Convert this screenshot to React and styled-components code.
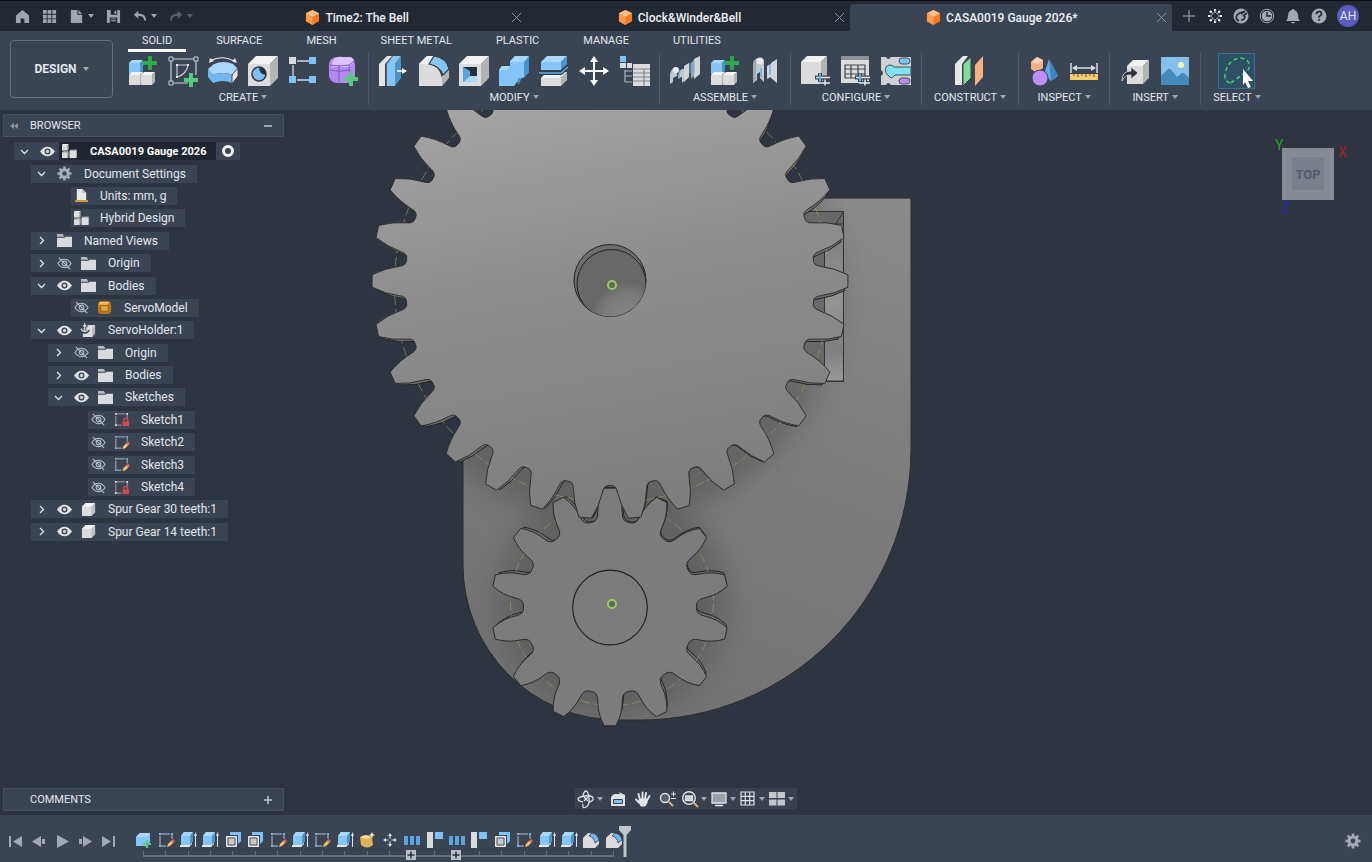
import React, { useState } from 'react';
import styled, { createGlobalStyle, css } from 'styled-components';

const GlobalStyle = createGlobalStyle`
  * {
    box-sizing: border-box;
  }

  body {
    margin: 0;
    background-color: #2e3440;
    color: #e4e7ec;
    font-family: Roboto, "Noto Sans", sans-serif;
    font-size: 12px;
  }

  button {
    margin: 0;
    padding: 0;
    border: none;
    background: none;
    color: inherit;
    font: inherit;
    cursor: pointer;
  }

  ul, ol {
    margin: 0;
    padding: 0;
    list-style: none;
  }

  svg {
    display: block;
    flex: none;
  }
`;

/* ---------- colours shared by the icons ---------- */

const tones = {
  white: { front: '#dcdcdc', top: '#f3f3f3', side: '#b4b4b4' },
  blue: { front: '#85c5f8', top: '#a8d8fd', side: '#4b93cb' },
};

const Cube = ({ x, y, w, h, d, tone = 'white' }) => {
  const t = tones[tone];
  return (
    <g>
      <path d={`M${x} ${y + d}l${d} ${-d}h${w}l${-d} ${d}z`} fill={t.top} />
      <path d={`M${x + w} ${y + d}l${d} ${-d}v${h}l${-d} ${d}z`} fill={t.side} />
      <rect x={x} y={y + d} width={w} height={h} fill={t.front} />
    </g>
  );
};

const Plus = ({ x, y, s = 7, color = '#2fa84f' }) => (
  <path d={`M${x - s} ${y}h${2 * s}M${x} ${y - s}v${2 * s}`} stroke={color} strokeWidth={s * 0.56} />
);

const Sliders = () => (
  <g>
    <path d="M14 21.500h15M18 27h11M19 17v9M24 23v7" stroke="#3b4453" strokeWidth="4" />
    <path d="M15 21.500h14M18 27h11M24 23.500v6" stroke="#e8e8e8" strokeWidth="1.500" />
    <path d="M19 17.500v8" stroke="#5cb3ee" strokeWidth="2" />
  </g>
);

const Component = () => (
  <g>
    <Cube x={1} y={4} w={11} h={11} d={3} tone="blue" />
    <Cube x={1} y={16} w={11} h={10} d={3} />
    <Cube x={13} y={16} w={11} h={10} d={3} />
    <Plus x={22} y={7} />
  </g>
);

const ribbonIcons = {
  component: <Component />,
  sketch: (
    <g fill="none" stroke="#c9ced6">
      <path d="M5 3h21M3 5v20M28 5v14M5 27h15" strokeWidth="1.2" />
      <path d="M9 9h11a14 14 0 0 1-11 12z" strokeWidth="1.2" />
      <path d="M1 1h4v4h-4zM26 1h4v4h-4zM1 25h4v4h-4z" fill="#3b4453" strokeWidth="1" />
      <path d="M8 8h2v2h-2zM19 8h2v2h-2zM8 20h2v2h-2z" fill="#e8e8e8" stroke="none" />
      <Plus x={23} y={24} s={7} color="#57cb7c" />
    </g>
  ),
  revolve: (
    <g>
      <path d="M2 5Q15-2 27 6" fill="none" stroke="#eee" strokeWidth="1.200" />
      <path d="M1 7l1-5 4 3zM29 7l-5-2 3-3z" fill="#eee" />
      <path d="M0 13l6-5q10-4 19 0l5 5-5 6q-10-4-20 0z" fill="#a8d8fd" />
      <path d="M0 13q2 2 5 6v8l-5-6zM5 19q10-4 19 0v8q-9-4-19 0z" fill="#70b8f0" />
      <path d="M24 19l6-7v8l-6 8z" fill="#e8e8e8" stroke="#444" strokeWidth="1" />
    </g>
  ),
  hole: (
    <g>
      <Cube x={0} y={0} w={22} h={22} d={8} />
      <circle cx="11" cy="18" r="7" fill="#7cc0f7" stroke="#333b46" strokeWidth="1.5" />
      <path d="M11 11a7 7 0 0 1 7 8q-7-1-7-8" fill="#27303a" />
    </g>
  ),
  pattern: (
    <g>
      <path d="M9 5h12M5 9v12M9 24h12" stroke="#d4d8de" strokeWidth="1.300" />
      <path d="M1 1h7v7h-7z" fill="#dcdcdc" />
      <path d="M21 1h7v7h-7zM1 20h7v7h-7zM21 20h7v7h-7z" fill="#7cc3fa" />
    </g>
  ),
  form: (
    <g>
      <rect x="1" y="1" width="26" height="26" rx="8" fill="#b48af0" />
      <path d="M5 5q3-5 9-4h7q5 0 5 5l-5 5h-16q-3-2 0-6z" fill="#dcc2ff" />
      <path d="M2 14q9 3 19 0M11 9v17M21 9q1 9 0 14M2 9q9 2 19 0l6-5" fill="none" stroke="#8058c8" strokeWidth="1" />
      <Plus x={23} y={23} color="#57cb7c" />
    </g>
  ),
  pressPull: (
    <g>
      <path d="M0 8l8-8h5l-7 8v22h-6z" fill="#e4e4e4" />
      <path d="M7 8l7-8v22l-7 8z" fill="#5d636c" />
      <path d="M8 8l6-8h8l-6 8v22h-8z" fill="#85c5f8" />
      <path d="M16 8l6-8v22l-6 8z" fill="#4b93cb" />
      <path d="M18 15h7" stroke="#fff" strokeWidth="1.500" />
      <path d="M23 12l5 3-5 3z" fill="#fff" />
    </g>
  ),
  fillet: (
    <g>
      <path d="M0 8l8-8h7l-5 8q10 1 13 14v8h-23z" fill="#dcdcdc" />
      <path d="M0 8l8-8h7l-5 8z" fill="#f3f3f3" />
      <path d="M23 20l7-7v9l-7 8z" fill="#b4b4b4" />
      <path d="M10 8l5-8q13 2 15 13l-6 6q-3-9-14-11z" fill="#85c5f8" stroke="#333b46" strokeWidth="1.200" />
    </g>
  ),
  shell: (
    <g>
      <Cube x={0} y={0} w={22} h={22} d={8} />
      <path d="M4 11h14v15h-14z" fill="#27303a" />
      <path d="M4 11l7 4v5l-7 6z" fill="#5aa5dd" />
      <path d="M4 26l7-6h7v6z" fill="#a8d8fd" />
    </g>
  ),
  combine: (
    <g>
      <path d="M0 14l3-4h8v-5l5-5h14v16l-6 6h-5v3l-4 5h-15z" fill="#85c5f8" />
      <path d="M11 6l5-6h14l-5 6zM0 14l3-4h8l-3 4z" fill="#a8d8fd" />
      <path d="M25 6l5-6v16l-5 6zM19 22h4l-4 7z" fill="#4b93cb" />
    </g>
  ),
  split: (
    <g>
      <Cube x={2} y={0} w={20} h={8} d={6} tone="blue" />
      <Cube x={2} y={16} w={20} h={8} d={6} />
      <path d="M0 17h22l7-6" fill="none" stroke="#333b46" strokeWidth="4" />
      <path d="M0 17h22l7-6" fill="none" stroke="#5cb3ee" strokeWidth="1.500" />
    </g>
  ),
  move: (
    <g fill="#fff">
      <path d="M15 5v20M5 15h20" stroke="#fff" strokeWidth="2" />
      <path d="M15 0l4 6h-8zM15 30l4-6h-8zM0 15l6-4v8zM30 15l-6-4v8z" />
    </g>
  ),
  parameters: (
    <g>
      <path d="M1 0h6v6h-6z" fill="#7cc3fa" />
      <path d="M1 7h6v5h-6zM8 7h5v5h-5z" fill="#dcdcdc" />
      <path d="M6 14v12M6 15h7M6 20h7M6 26h7" fill="none" stroke="#aeb4bd" strokeWidth="1.200" />
      <path d="M14 8h17v22h-17z" fill="#dcdcdc" />
      <path d="M14 13h17M14 17h17M14 21h17M14 25h17M25 13v17" stroke="#808790" strokeWidth="1.200" />
    </g>
  ),
  joint: (
    <g>
      <path d="M0 28v-10q2-7 6-7l1 1v8l-4 2v4zM8 22q1-10 6-9v12l-2 2v-6z" fill="#c4c7cc" />
      <path d="M14 10l5-3v14l-5 5zM24 3l6-3v18l-6 5z" fill="#d3d5d9" />
      <path d="M21 7l3-3v16l-3 3z" fill="#9ca1a9" />
      <path d="M9 14v9M20 7v10M24 5v12" stroke="#59b1ef" strokeWidth="1" />
      <circle cx="6" cy="14" r="3" fill="#eaeaea" />
    </g>
  ),
  asBuilt: (
    <g>
      <path d="M3 27v-18q0-6 6-7l5 2v22l-4-4v-6l-3 2v6z" fill="#c4c7cc" />
      <path d="M3 27v-18q0-4 3-6v20z" fill="#a5a9b0" />
      <circle cx="10" cy="5" r="3.500" fill="#eaeaea" />
      <path d="M17 10l4-2v13l-4 2zM21 7l6-4v24l-6-5z" fill="#d3d5d9" />
      <path d="M11 12v9M20 8v11" stroke="#59b1ef" strokeWidth="1.300" />
    </g>
  ),
  configure: (
    <g>
      <Cube x={0} y={0} w={20} h={22} d={6} />
      <Sliders />
    </g>
  ),
  configTable: (
    <g>
      <path d="M0 0h28v27h-28z" fill="#dcdcdc" />
      <path d="M0 0h28v4h-28z" fill="#8b9099" />
      <path d="M4 9h20v13h-20zM4 13h20M4 18h20M10 9v13M17 9v13" fill="none" stroke="#3f4650" strokeWidth="1.200" />
      <Sliders />
    </g>
  ),
  configPuzzle: (
    <g stroke="#4a525e" strokeWidth="1">
      <path d="M0 1h5q2 4 5 0h20v28h-20q-3-4-5 0h-5v-9q4-3 0-6z" fill="#cfd1d5" stroke="none" />
      <rect x="18" y="2" width="11" height="6" rx="3" fill="#7cc3fa" />
      <path d="M5 11q4-4 8 0h17v8h-16q-4 5-6 1-5-3-3-9z" fill="#7fe3f2" />
      <rect x="18" y="22" width="11" height="6" rx="3" fill="#b98cf4" />
    </g>
  ),
  plane: (
    <g>
      <path d="M0 8l8-8h5l-6 8v21h-7z" fill="#e8e8e8" />
      <path d="M8 8l8-7v21l-8 8z" fill="#7fdc9c" stroke="#3a424d" strokeWidth="1" />
      <path d="M20 9l8-9v21l-8 9z" fill="#f4b183" />
    </g>
  ),
  analysis: (
    <g>
      <path d="M2 6l6-5 6 3v8l-6 5-6-4z" fill="#f4b183" />
      <path d="M2 6l6-5 6 3-5 4z" fill="#fbd0b0" />
      <path d="M20 3l9 17-7 5-7-7z" fill="#5cade9" />
      <path d="M20 3l9 17-7 5z" fill="#3f86bf" />
      <circle cx="11" cy="22" r="8" fill="#bd8ff7" stroke="#3b4453" strokeWidth="1" />
    </g>
  ),
  measure: (
    <g>
      <path d="M2 7v10M28 7v10M4 12h22" stroke="#d9dce1" strokeWidth="1.500" />
      <path d="M3 12l5-3v6zM27 12l-5-3v6z" fill="#d9dce1" />
      <path d="M1 18h28v6h-28z" fill="#f5cb70" />
      <path d="M5 18v2M9 18v3M13 18v2M17 18v3M21 18v2M25 18v3" stroke="#6d5a2c" strokeWidth="1" />
    </g>
  ),
  insert: (
    <g>
      <Cube x={7} y={4} w={16} h={18} d={6} />
      <path d="M2 25q0-10 9-10v-4l7 6-7 6v-4q-6-1-9 6z" fill="#2a313b" stroke="#dcdcdc" strokeWidth=".8" />
    </g>
  ),
  canvas: (
    <g>
      <path d="M1 1h28v28h-28z" fill="#86bfea" />
      <path d="M1 20l7-7q2-1 4 2l5 6 5-4q3 0 7 5v7h-28z" fill="#4389bb" />
      <circle cx="21" cy="9" r="3" fill="#fbf1ae" />
    </g>
  ),
  select: (
    <g>
      <path
        d="M8 27q-6-2-5-9 3-15 16-16 10 2 8 10-2 5-8 7-6 6-11 8z"
        fill="none"
        stroke="#4fc47b"
        strokeWidth="1.600"
        strokeDasharray="4 3"
      />
      <path d="M21 13l10 12h-5l3 6-3 1-3-6-2 3z" fill="#fff" />
    </g>
  ),
};

const RibbonIcon = ({ name }) => (
  <svg width="30" height="30" viewBox="0 0 30 30" overflow="visible">
    {ribbonIcons[name]}
  </svg>
);

const smallIcons = {
  home: <path d="M8 1l7 6v8h-5v-5h-4v5h-5v-8z" />,
  grid: <path d="M1 1h4v4h-4zM6 1h4v4h-4zM11 1h4v4h-4zM1 6h4v4h-4zM6 6h4v4h-4zM11 6h4v4h-4zM1 11h4v4h-4zM6 11h4v4h-4zM11 11h4v4h-4z" />,
  file: <path d="M2 1h7v5h5v9h-12zM10 1l4 4h-4z" />,
  save: (
    <g>
      <path d="M1 1h13l1 1v13h-14z" />
      <path d="M5 1h7v5h-7zM4 9h8v6h-8z" fill="#222933" />
      <path d="M9 2h2v3h-2zM5 10h6v1h-6zM5 12h6v1h-6z" />
    </g>
  ),
  undo: <path d="M6 2L1 6.500 6 11v-3q6-1 7 5h2q0-8-9-8z" />,
  redo: <path d="M10 2l5 4.500L10 11v-3q-6-1-7 5h-2q0-8 9-8z" />,
  extensions: (
    <g stroke="#eceef1" strokeWidth="2.200">
      <path d="M8 1v4M13 3l-3 3M15 8h-4M13 13l-3-3M8 15v-4M3 13l3-3M1 8h4M3 3l3 3" strokeDasharray="2.500 1" />
    </g>
  ),
  plug: (
    <g>
      <circle cx="8" cy="8" r="7.500" />
      <path d="M6 13q-4-2-2-6 3-3 6-3M8 6l4-3M10 8l4-3M8 12q4 0 4-4" fill="none" stroke="#222933" strokeWidth="1.600" />
    </g>
  ),
  clock: (
    <g>
      <circle cx="8" cy="8" r="6.800" fill="none" stroke="currentColor" strokeWidth="1" />
      <circle cx="8" cy="8" r="5.300" />
      <path d="M8 4v4h4" fill="none" stroke="#222933" strokeWidth="1.500" />
    </g>
  ),
  bell: <path d="M7 1h2v1q4 1 4 6 0 3 2 5h-14q2-2 2-5 0-5 4-6zM6 14h4q-2 3-4 0z" />,
  help: (
    <g>
      <circle cx="8" cy="8" r="7.500" />
      <path d="M5.500 6q0-2.500 2.500-2.500t2.500 2.500q0 1.500-2.500 2.500v1.200M8 11v1.800" fill="none" stroke="#222933" strokeWidth="1.700" />
    </g>
  ),
  model: (
    <g>
      <path d="M8 0l7 3.500v8.500l-7 4-7-4v-8.500z" fill="#f57a1f" />
      <path d="M8 0l7 3.500-7 4-7-4z" fill="#ffc08d" />
      <path d="M1 3.500l7 4v8.500l-7-4z" fill="#ff9a4d" />
    </g>
  ),
  eye: (
    <g>
      <path d="M0 8q3.500-5 8-5t8 5q-3.500 5-8 5t-8-5z" fill="#e4e4e4" />
      <circle cx="8" cy="8" r="3.200" fill="#3b4453" />
      <circle cx="8" cy="8" r="1.800" fill="#c8ccd2" />
    </g>
  ),
  hidden: (
    <g fill="none" stroke="#b8bdc6" strokeWidth="1.200">
      <path d="M1 8q3-4.500 7-4.500t7 4.500q-3 4.500-7 4.500t-7-4.500z" />
      <circle cx="8" cy="8" r="2.500" />
      <path d="M2 2l12 12" />
    </g>
  ),
  gear: (
    <g>
      <circle cx="8" cy="8" r="4" fill="none" stroke="currentColor" strokeWidth="3.200" />
      <path
        d="M8 .5v3M8 12.500v3M.5 8h3M12.500 8h3M2.700 2.700l2.100 2.100M11.200 11.200l2.100 2.100M2.700 13.300l2.100-2.100M11.200 4.800l2.100-2.100"
        stroke="currentColor"
        strokeWidth="2.600"
      />
    </g>
  ),
  folder: (
    <g>
      <path d="M0 5h8l1-1h7v11h-16z" fill="#d9dadb" />
      <path d="M0 1h6l2 3h-8z" fill="#b9bcc1" />
    </g>
  ),
  units: (
    <g>
      <path d="M3 1h6l4 4v8h-10z" fill="#e8e8e8" />
      <path d="M9 1l4 4h-4z" fill="#b4b4b4" />
      <path d="M1 13h14v2h-14z" fill="#e0a030" />
    </g>
  ),
  parts: (
    <g>
      <Cube x={0} y={0} w={6} h={6} d={1} />
      <Cube x={0} y={8} w={6} h={6} d={1} />
      <Cube x={8} y={6} w={7} h={8} d={1} />
    </g>
  ),
  body: (
    <g>
      <path d="M1 5l4-4h10v10l-4 4h-10z" fill="#dcdcdc" />
      <path d="M1 5l4-4h10l-4 4z" fill="#f3f3f3" />
      <path d="M11 5l4-4v10l-4 4z" fill="#c0c0c0" />
    </g>
  ),
  grounded: (
    <g>
      <path d="M2 6l4-4h9v9l-3 4h-10z" fill="#dcdcdc" />
      <path d="M12 5l3-3v9l-3 4z" fill="#b4b4b4" />
      <path d="M4 0v10M1 3h6M0 7q1 3 4 3t4-3" fill="none" stroke="#3b4453" strokeWidth="3" />
      <path d="M4 0v9M2 3h4M0 6q1 3 4 3t4-3" fill="none" stroke="#e4e4e4" strokeWidth="1.200" />
    </g>
  ),
  servo: (
    <g>
      <rect x="1" y="1" width="14" height="14" rx="4" fill="#b9791b" />
      <path d="M3 2h10l-2 3h-9z" fill="#f1c15c" />
      <path d="M4 6h8v6h-8z" fill="#e7a73a" stroke="#8a5a10" strokeWidth=".8" />
    </g>
  ),
  sketchLocked: (
    <g>
      <path d="M3 2h9M2 4v9M14 3v5M3 14h5" stroke="#9ea5b0" strokeWidth="1" />
      <path d="M1 1h2v2h-2zM13 1h2v2h-2zM1 13h2v2h-2z" fill="#dfe2e6" />
      <path d="M9 10h7v5h-7z" fill="#d6484c" />
      <path d="M10.500 10v-3h4v3" fill="none" stroke="#d6484c" strokeWidth="1.300" />
    </g>
  ),
  sketchEdit: (
    <g>
      <path d="M3 2h9M2 4v9M14 3v4M3 14h5" stroke="#b8bdc6" strokeWidth="1" />
      <path d="M1 1h2v2h-2zM13 1h2v2h-2zM1 13h2v2h-2z" fill="#6cb8f2" />
      <path d="M9 15l1-3 4-4 2 2-4 4z" fill="#f3c667" />
      <path d="M13 9l2-2 2 2-2 2z" fill="#e0625c" />
    </g>
  ),
  newPart: (
    <g>
      <path d="M1 5l4-4h10v9l-4 4h-10z" fill="#85c5f8" />
      <path d="M1 5l4-4h10l-3 4z" fill="#a8d8fd" />
      <Plus x={12} y={12} s={4} color="#57cb7c" />
    </g>
  ),
  extrude: (
    <g>
      <path d="M0 15v-2h9l3-3v2l-3 3z" fill="#e8e8e8" />
      <path d="M1 4l3-4h9v9l-3 4h-9z" fill="#85c5f8" />
      <path d="M1 4l3-4h9l-3 4z" fill="#a8d8fd" />
      <path d="M10 4l3-4v9l-3 4z" fill="#4b93cb" />
      <path d="M15.500 3v12" stroke="#dfe2e6" strokeWidth="1" />
      <path d="M14 4l1.500-4 1.500 4z" fill="#dfe2e6" />
    </g>
  ),
  shellSmall: (
    <g>
      <path d="M5 0h11v9l-3 3v-9h-8z" fill="#7cc3fa" />
      <path d="M1.500 4.500h10v10h-10z" fill="#dcdcdc" stroke="#e8e8e8" strokeWidth="1" />
      <path d="M3 6h7v7h-7z" fill="#c9c9c9" stroke="#4c525b" strokeWidth="1" />
    </g>
  ),
  base: (
    <g>
      <path d="M1 5q6-4 12 0l1 8q-6 5-12 0z" fill="#dcb456" />
      <path d="M2 5q5-3 10 0-5 3-10 0z" fill="#f6dfa0" />
      <path d="M13 0l1 2 2 1-2 1-1 2-1-2-2-1 2-1z" fill="#fbe7b0" />
    </g>
  ),
  moveSmall: (
    <g fill="#dfe2e6">
      <path d="M8 4v2.500M8 9.500v2.500M4 8h2.500M9.500 8h2.500" stroke="#dfe2e6" strokeWidth="1.200" />
      <path d="M8 1l2 3h-4zM8 15l2-3h-4zM1 8l3-2v4zM15 8l-3-2v4z" />
    </g>
  ),
  array: <path d="M0 4h4v9h-4zM6 4h4v9h-4zM12 4h4v9h-4z" fill="#5ba6de" />,
  mirror: (
    <g>
      <path d="M0 0h6v16h-6z" fill="#dcdcdc" />
      <path d="M8 0h8v7h-8z" fill="#7cc3fa" />
    </g>
  ),
  filletSmall: (
    <g>
      <path d="M0 6l5-5q9 0 11 8v3l-4 4h-12z" fill="#dcdcdc" />
      <path d="M6 4l3-3q6 1 7 7l-4 3q-1-6-6-7z" fill="#6cb8f2" stroke="#333b46" strokeWidth=".8" />
    </g>
  ),
  first: <path d="M1 3h2v11h-2zM14 3v11l-9-5.500z" />,
  previous: <path d="M10 3v11l-9-5.500zM11 6h3v5h-3z" />,
  play: <path d="M3 2l12 6.500-12 6.500z" />,
  next: <path d="M6 3v11l9-5.500zM2 6h3v5h-3z" />,
  last: <path d="M13 3h2v11h-2zM2 3v11l9-5.500z" />,
  orbit: (
    <g fill="none" stroke="#dfe2e6" strokeWidth="1.300">
      <path d="M5 11q-5-1-5-3t7-3 8 2-4 4" />
      <path d="M5 5q1-5 3-5t3 7-3 9-3-3" />
      <path d="M6 6l4 4M10 6l-4 4" />
    </g>
  ),
  lookAt: (
    <g>
      <path d="M2 5l2-2h6l-1-2 6 3v11h-14v-9z" fill="#e0e2e5" />
      <path d="M3.500 8.500h9v4h-9z" fill="#7cc3fa" stroke="#3b4453" strokeWidth="1" />
    </g>
  ),
  pan: (
    <g stroke="#e4e4e4" strokeWidth="1.900" strokeLinecap="round">
      <path d="M5 9L3.500 3M7.500 8V1.500M10 8L11 2M12 9.500L14.500 5M4.500 12L1 8.500" />
      <path d="M5 8h7v4l-2 3h-4l-2-4z" fill="#e4e4e4" strokeWidth="1" />
    </g>
  ),
  zoom: (
    <g fill="none" stroke="#dfe2e6" strokeWidth="1.400">
      <circle cx="5" cy="7" r="4.500" fill="#59616e" />
      <path d="M9 11l4 4" stroke="#d9b16c" strokeWidth="2" />
      <path d="M11 3h5M13.500 .5v5M11 7.500h5" strokeWidth="1" />
    </g>
  ),
  zoomWindow: (
    <g fill="none" stroke="#dfe2e6" strokeWidth="1.400">
      <circle cx="7" cy="7" r="6.300" />
      <path d="M3.500 5h7v4.500h-7z" fill="#c9ccd1" />
      <path d="M12 12l4 4" stroke="#d9b16c" strokeWidth="2" />
    </g>
  ),
  display: (
    <g>
      <path d="M1 2h14v10h-14z" fill="#9aa0a9" stroke="#dfe2e6" strokeWidth="1.300" />
      <path d="M4 14.500h8" stroke="#dfe2e6" strokeWidth="1.600" />
    </g>
  ),
  gridSettings: <path d="M1 1h13v13h-13zM5.300 1v13M9.700 1v13M1 5.300h13M1 9.700h13" fill="none" stroke="#dfe2e6" strokeWidth="1.200" />,
  viewports: <path d="M0 1h7.500v6h-7.500zM8.500 1h7.500v6h-7.500zM0 8.500h7.500v6h-7.500zM8.500 8.500h7.500v6h-7.500z" fill="#c3c6cb" />,
};

const SmallIcon = ({ name, size = 16 }) => (
  <svg width={size} height={size} viewBox="0 0 16 16" overflow="visible" fill="currentColor">
    {smallIcons[name]}
  </svg>
);

/* ---------- top bar ---------- */

const Page = styled.div`
  display: flex;
  flex-direction: column;
  min-height: 100vh;
`;

const TopBar = styled.header`
  display: flex;
  height: 31px;
  background-color: #222933;
  border-top: 1px solid #0c0e12;
`;

const QuickActions = styled.div`
  display: flex;
  align-items: center;
  gap: 12px;
  width: 205px;
  padding-left: 15px;
  color: #9fa4ae;
`;

const QuickButton = styled.button`
  display: flex;
  align-items: center;
  gap: 4px;
  opacity: ${props => (props.$dim ? 0.45 : 1)};
`;

const Caret = styled.span`
  display: inline-block;
  border: 3px solid transparent;
  border-top: 4px solid #9fa4ae;
  border-bottom: none;
`;

const DocTabs = styled.div`
  display: flex;
  flex: 1;
`;

const DocTab = styled.div`
  display: flex;
  flex: 1;
  align-items: center;
  margin-top: 3px;
  padding-right: 3px;
  border-radius: 3px 3px 0 0;
  background-color: ${props => (props.$active ? '#3b4453' : 'transparent')};
`;

const DocTitle = styled.button`
  display: flex;
  flex: 1;
  align-items: center;
  justify-content: center;
  gap: 5px;
  color: #eef0f3;
  font-weight: 500;
`;

const CloseButton = styled.button`
  display: flex;
  padding: 3px;
  color: #8c929d;
`;

const AccountBar = styled.div`
  display: flex;
  align-items: center;
  gap: 10px;
  width: 200px;
  padding-left: 9px;
  color: #a3a8b1;
`;

const Avatar = styled.button`
  width: 22px;
  height: 22px;
  border-radius: 50%;
  background-color: #5c5bc0;
  color: #e6e6f8;
`;

const documents = ['Time2: The Bell', 'Clock&Winder&Bell', 'CASA0019 Gauge 2026*'];

const Cross = () => (
  <svg width="9" height="9" viewBox="0 0 9 9" stroke="currentColor">
    <path d="M0 0L9 9M9 0L0 9" />
  </svg>
);

const Header = () => {
  const [active, setActive] = useState(2);

  return (
    <TopBar>
      <QuickActions>
        <QuickButton aria-label="Home"><SmallIcon name="home" size={15} /></QuickButton>
        <QuickButton aria-label="Data panel"><SmallIcon name="grid" size={15} /></QuickButton>
        <QuickButton aria-label="File"><SmallIcon name="file" size={15} /><Caret /></QuickButton>
        <QuickButton aria-label="Save"><SmallIcon name="save" size={15} /></QuickButton>
        <QuickButton aria-label="Undo"><SmallIcon name="undo" size={14} /><Caret /></QuickButton>
        <QuickButton aria-label="Redo" $dim><SmallIcon name="redo" size={14} /><Caret /></QuickButton>
      </QuickActions>
      <DocTabs>
        {documents.map((name, i) => (
          <DocTab key={name} $active={i === active}>
            <DocTitle onClick={() => setActive(i)}>
              <SmallIcon name="model" size={15} />
              {name}
            </DocTitle>
            <CloseButton aria-label={`Close ${name}`}><Cross /></CloseButton>
          </DocTab>
        ))}
      </DocTabs>
      <AccountBar>
        <QuickButton aria-label="New tab">
          <svg width="16" height="16" viewBox="0 0 16 16" stroke="#7e8590" strokeWidth="1.500"><path d="M8 2v12M2 8h12" /></svg>
        </QuickButton>
        <QuickButton aria-label="Extensions"><SmallIcon name="extensions" /></QuickButton>
        <QuickButton aria-label="Job status"><SmallIcon name="plug" /></QuickButton>
        <QuickButton aria-label="Recent"><SmallIcon name="clock" /></QuickButton>
        <QuickButton aria-label="Notifications"><SmallIcon name="bell" /></QuickButton>
        <QuickButton aria-label="Help"><SmallIcon name="help" /></QuickButton>
        <Avatar>AH</Avatar>
      </AccountBar>
    </TopBar>
  );
};

/* ---------- ribbon ---------- */

const RibbonBar = styled.div`
  display: flex;
  gap: 5px;
  height: 79px;
  padding-left: 10px;
  background-color: #3b4453;
`;

const Workspace = styled.button`
  display: flex;
  align-items: center;
  justify-content: center;
  gap: 6px;
  width: 103px;
  height: 58px;
  margin-top: 9px;
  border: 1px solid #67707e;
  border-radius: 4px;
  font-weight: 700;
`;

const RibbonBody = styled.div`
  display: flex;
  flex: 1;
  flex-direction: column;
`;

const RibbonTabs = styled.div`
  display: flex;
  gap: 16px;
  height: 21px;
  padding-left: 10px;
`;

const RibbonTab = styled.button`
  padding: 0 14px;
  border-bottom: 3px solid ${props => (props.$active ? '#ffffff' : 'transparent')};
  font-size: 11px;
`;

const Groups = styled.div`
  display: flex;
  padding-top: 1px;
`;

const Group = styled.div`
  display: flex;
  flex-direction: column;
  align-items: center;
  padding: 0 5px;
  border-right: 1px solid ${props => (props.$last ? 'transparent' : '#525b69')};
`;

const Tools = styled.div`
  display: flex;
`;

const Tool = styled.button`
  display: flex;
  align-items: center;
  justify-content: center;
  width: 40px;
  height: 36px;

  ${props =>
    props.$selected &&
    css`
      width: 37px;
      border: 1px solid #33718e;
      background-color: #2e5064;
    `}
`;

const GroupMenu = styled.button`
  display: flex;
  align-items: center;
  gap: 3px;
  height: 16px;
  padding: 0 7px;
  font-size: 11px;
`;

const tabs = ['SOLID', 'SURFACE', 'MESH', 'SHEET METAL', 'PLASTIC', 'MANAGE', 'UTILITIES'];

const groups = [
  { label: 'CREATE', tools: ['component', 'sketch', 'revolve', 'hole', 'pattern', 'form'] },
  { label: 'MODIFY', tools: ['pressPull', 'fillet', 'shell', 'combine', 'split', 'move', 'parameters'] },
  { label: 'ASSEMBLE', tools: ['joint', 'component', 'asBuilt'] },
  { label: 'CONFIGURE', tools: ['configure', 'configTable', 'configPuzzle'] },
  { label: 'CONSTRUCT', tools: ['plane'] },
  { label: 'INSPECT', tools: ['analysis', 'measure'] },
  { label: 'INSERT', tools: ['insert', 'canvas'] },
  { label: 'SELECT', tools: ['select'] },
];

const Ribbon = () => {
  const [tab, setTab] = useState('SOLID');

  return (
    <RibbonBar>
      <Workspace>DESIGN <Caret /></Workspace>
      <RibbonBody>
        <RibbonTabs>
          {tabs.map(name => (
            <RibbonTab key={name} $active={name === tab} onClick={() => setTab(name)}>{name}</RibbonTab>
          ))}
        </RibbonTabs>
        <Groups>
          {groups.map(group => (
            <Group key={group.label} $last={group.label === 'SELECT'}>
              <Tools>
                {group.tools.map(name => (
                  <Tool key={name} aria-label={name} $selected={name === 'select'}>
                    <RibbonIcon name={name} />
                  </Tool>
                ))}
              </Tools>
              <GroupMenu>{group.label} <Caret /></GroupMenu>
            </Group>
          ))}
        </Groups>
      </RibbonBody>
    </RibbonBar>
  );
};

/* ---------- model ---------- */

const at = (cx, cy, r, deg) => {
  const a = (deg * Math.PI) / 180;
  return `${(cx + r * Math.cos(a)).toFixed(2)} ${(cy + r * Math.sin(a)).toFixed(2)}`;
};

// flank: [radius, half angle] pairs for tip, control, shoulder, fillet control
const gearPath = (cx, cy, teeth, root, flank, start) => {
  const step = 360 / teeth;
  const [tip, ctrl, shoulder, fillet] = flank;
  const p = (point, mid, side) => at(cx, cy, point[0], mid + side * point[1]);
  let d = '';
  for (let i = 0; i < teeth; i += 1) {
    const mid = start + i * step;
    d += i === 0 ? `M${at(cx, cy, root, mid - step / 2)}` : '';
    d += `Q${p(fillet, mid, -1)} ${p(shoulder, mid, -1)}`;
    d += `Q${p(ctrl, mid, -1)} ${p(tip, mid, -1)}`;
    d += `L${p(tip, mid, 1)}`;
    d += `Q${p(ctrl, mid, 1)} ${p(shoulder, mid, 1)}`;
    d += `Q${p(fillet, mid, 1)} ${at(cx, cy, root, mid + step / 2)}`;
  }
  return `${d}z`;
};

const bigGear = gearPath(610, 281, 30, 204.5, [[238, 1.5], [225, 3.3], [211, 4], [204, 4.3]], 0);
const smallGear = gearPath(610, 607, 14, 86.5, [[119, 2.8], [108, 6.5], [95, 7.4], [86, 8]], 90);
const plate = 'M700 198H911V449A271 271 0 0 1 640 720H618A155 155 0 0 1 463 565V400z';

// lower faces recede towards the middle of the view
const receding = 'translate(686 462) scale(.981) translate(-686 -462)';

const Scene = styled.svg`
  position: absolute;
  inset: 0;
  width: 100%;
  height: 100%;
`;

const Model = () => (
  <Scene viewBox="0 110 1372 705" preserveAspectRatio="xMidYMid slice" role="img" aria-label="Gear model">
    <defs>
      <linearGradient id="face" gradientUnits="userSpaceOnUse" x1="560" y1="90" x2="640" y2="520">
        <stop offset="0" stopColor="#a4a4a4" />
        <stop offset=".4" stopColor="#8e8e8e" />
        <stop offset="1" stopColor="#7d7d7d" />
      </linearGradient>
      <linearGradient id="plate" gradientUnits="userSpaceOnUse" x1="880" y1="200" x2="680" y2="720">
        <stop offset="0" stopColor="#898989" />
        <stop offset=".5" stopColor="#7c7c7c" />
        <stop offset="1" stopColor="#727272" />
      </linearGradient>
      <linearGradient id="slot" x1="0" y1="0" x2="0" y2="1">
        <stop offset="0" stopColor="#7c7c7c" />
        <stop offset=".5" stopColor="#949494" />
        <stop offset=".8" stopColor="#7e7e7e" />
        <stop offset="1" stopColor="#999" />
      </linearGradient>
      <radialGradient id="bore" gradientUnits="userSpaceOnUse" cx="628" cy="320" r="38">
        <stop offset="0" stopColor="#858585" />
        <stop offset=".65" stopColor="#7c7c7c" />
        <stop offset="1" stopColor="#686868" />
      </radialGradient>
      <filter id="soft" x="-20%" y="-20%" width="140%" height="140%">
        <feGaussianBlur stdDeviation="14" />
      </filter>
      <clipPath id="plateClip"><path d={plate} /></clipPath>
      <clipPath id="boreClip"><circle cx="610" cy="280.500" r="36" /></clipPath>
    </defs>

    <path d={plate} fill="url(#plate)" stroke="#2b2b2b" strokeWidth="1" />
    <g clipPath="url(#plateClip)">
      <g filter="url(#soft)" fill="#3a3a3a" opacity=".36">
        <circle cx="610" cy="296" r="225" />
        <circle cx="613" cy="600" r="112" />
      </g>
    </g>

    <path d="M800 211.500h43.500v170h-43.500z" fill="#686868" stroke="#333" />
    <path d="M824.500 224h19v157h-19z" fill="url(#slot)" stroke="#333" />
    <path d="M843.500 211.500l-8 13" stroke="#333" />

    <g transform={receding} fill="#6c6c6c" stroke="#222" strokeWidth="1">
      <path d={smallGear} />
      <path d={bigGear} />
    </g>

    <g fill="none" stroke="#8c9c5c" strokeWidth="1" strokeDasharray="9 4" opacity=".7">
      <circle cx="612" cy="285" r="217.500" />
      <circle cx="612" cy="604" r="101.500" />
    </g>

    <path d={smallGear} fill="#7c7c7c" stroke="#2a2a2a" strokeWidth="1" />
    <path d={bigGear} fill="url(#face)" stroke="#2f2f2f" strokeWidth="1" />

    <circle cx="610" cy="280.500" r="36" fill="#6e6e6e" stroke="#222" />
    <circle cx="611.500" cy="284" r="34.500" fill="url(#bore)" stroke="#222" clipPath="url(#boreClip)" />
    <circle cx="610" cy="607.500" r="37.300" fill="none" stroke="#222" strokeWidth="1.200" />

    <g fill="#5c6b4c" stroke="#9cc76c" strokeWidth="2">
      <circle cx="612" cy="285" r="4" />
      <circle cx="612" cy="604" r="4" />
    </g>
  </Scene>
);

/* ---------- viewport and its panels ---------- */

const Viewport = styled.main`
  position: relative;
  display: flex;
  flex: 1;
  flex-direction: column;
  justify-content: space-between;
  min-height: 600px;
  padding: 4px 3px;
  overflow: hidden;
`;

const Overlay = styled.div`
  position: relative;
  display: flex;
  align-items: flex-start;
  justify-content: space-between;
`;

const BottomOverlay = styled.div`
  position: relative;
  display: grid;
  grid-template-columns: 1fr auto 1fr;
  align-items: start;
`;

const PanelHeader = styled.div`
  display: flex;
  align-items: center;
  justify-content: space-between;
  width: 281px;
  height: 23px;
  padding: 0 11px 0 6px;
  border: 1px solid #465060;
  background-color: #3b4453;
  font-size: 11px;
`;

const PanelTitle = styled.span`
  display: flex;
  align-items: center;
  gap: 12px;
`;

const Chevrons = styled.span`
  width: 8px;
  color: #8a919d;
`;

const PanelButton = styled.button`
  display: flex;
  color: #c3c7ce;
`;

const Tree = styled.ul`
  display: grid;
  grid-auto-rows: 1fr;
  align-items: center;
  justify-items: start;
  height: 403px;
  margin-top: 3px;
`;

const Slot = styled.span`
  display: flex;
  align-items: center;
  justify-content: center;
  width: 24px;
  color: #a9aeb8;

  &:first-child {
    width: 21px;
  }
`;

const SlotButton = styled(Slot).attrs({ as: 'button' })``;

const Chip = styled.li`
  display: flex;
  align-items: center;
  height: 18px;
  margin-left: ${props => props.$indent}px;
  padding-right: ${props => (props.$root ? 0 : 11)}px;
  background-color: #3b4453;
`;

const NodeName = styled.span`
  padding-left: 8px;
`;

const RootName = styled.span`
  display: flex;
  align-items: center;
  align-self: stretch;
  gap: 2px;
  padding-right: 10px;
  background-color: #1f252e;
  color: #ffffff;
  font-size: 11px;
  font-weight: 700;
`;

const ActiveDot = styled.input`
  appearance: none;
  width: 12px;
  height: 12px;
  margin: 0 6px;
  border: 3px solid #f4f4f4;
  border-radius: 50%;
`;

const nodes = [
  { name: 'Document Settings', indent: 28, arrow: 'open', icon: 'gear' },
  { name: 'Units: mm, g', indent: 68, icon: 'units' },
  { name: 'Hybrid Design', indent: 68, icon: 'parts' },
  { name: 'Named Views', indent: 28, arrow: 'closed', icon: 'folder' },
  { name: 'Origin', indent: 28, arrow: 'closed', eye: 'hidden', icon: 'folder' },
  { name: 'Bodies', indent: 28, arrow: 'open', eye: 'eye', icon: 'folder' },
  { name: 'ServoModel', indent: 68, eye: 'hidden', icon: 'servo' },
  { name: 'ServoHolder:1', indent: 28, arrow: 'open', eye: 'eye', icon: 'grounded' },
  { name: 'Origin', indent: 45, arrow: 'closed', eye: 'hidden', icon: 'folder' },
  { name: 'Bodies', indent: 45, arrow: 'closed', eye: 'eye', icon: 'folder' },
  { name: 'Sketches', indent: 45, arrow: 'open', eye: 'eye', icon: 'folder' },
  { name: 'Sketch1', indent: 85, eye: 'hidden', icon: 'sketchLocked' },
  { name: 'Sketch2', indent: 85, eye: 'hidden', icon: 'sketchEdit' },
  { name: 'Sketch3', indent: 85, eye: 'hidden', icon: 'sketchEdit' },
  { name: 'Sketch4', indent: 85, eye: 'hidden', icon: 'sketchLocked' },
  { name: 'Spur Gear 30 teeth:1', indent: 28, arrow: 'closed', eye: 'eye', icon: 'body' },
  { name: 'Spur Gear 14 teeth:1', indent: 28, arrow: 'closed', eye: 'eye', icon: 'body' },
];

const Arrow = ({ open }) => (
  <svg width="9" height="9" viewBox="0 0 9 9" fill="none" stroke="#dfe2e6" strokeWidth="1.300">
    <path d={open ? 'M1 3l3.500 3.500L8 3' : 'M3 1l3.500 3.500L3 8'} />
  </svg>
);

const Browser = () => (
  <section>
    <PanelHeader>
      <PanelTitle>
        <Chevrons>
          <svg width="8" height="6" viewBox="0 0 8 6" fill="currentColor"><path d="M4 0v6L0 3zM8 0v6L4 3z" /></svg>
        </Chevrons>
        BROWSER
      </PanelTitle>
      <PanelButton aria-label="Collapse browser">
        <svg width="8" height="8" viewBox="0 0 8 8"><path d="M0 4h8" stroke="currentColor" strokeWidth="1.500" /></svg>
      </PanelButton>
    </PanelHeader>
    <Tree>
      <Chip $indent={11} $root>
        <SlotButton aria-label="Collapse"><Arrow open /></SlotButton>
        <SlotButton aria-label="Visibility"><SmallIcon name="eye" size={15} /></SlotButton>
        <RootName>
          <Slot><SmallIcon name="parts" size={15} /></Slot>
          <NodeName>CASA0019 Gauge 2026</NodeName>
        </RootName>
        <ActiveDot type="radio" aria-label="Activate CASA0019 Gauge 2026" defaultChecked />
      </Chip>
      {nodes.map((node, i) => (
        <Chip key={i} $indent={node.indent}>
          {node.arrow && <SlotButton aria-label="Toggle"><Arrow open={node.arrow === 'open'} /></SlotButton>}
          {node.eye && <SlotButton aria-label="Visibility"><SmallIcon name={node.eye} size={15} /></SlotButton>}
          <Slot><SmallIcon name={node.icon} size={15} /></Slot>
          <NodeName>{node.name}</NodeName>
        </Chip>
      ))}
    </Tree>
  </section>
);

const ViewCube = () => (
  <svg width="100" height="110" viewBox="0 0 100 110" fontSize="13" role="img" aria-label="View cube">
    <rect x="13" y="34" width="52" height="52" fill="#868a94" />
    <rect x="23" y="43" width="32" height="33" fill="#7a7f8b" />
    <text x="39" y="65" textAnchor="middle" fontWeight="700" fill="#545a68">TOP</text>
    <text x="6" y="36" fontSize="14" fill="#26a334">Y</text>
    <text x="69" y="43" fontSize="14" fill="#a3202c">X</text>
    <text x="13" y="99" fontSize="14" fill="#2424b4">Z</text>
  </svg>
);

const NavBar = styled.div`
  display: flex;
  align-items: center;
  height: 21px;
  padding: 0 1px;
  background-color: #39414f;
`;

const NavButton = styled.button`
  display: flex;
  align-items: center;
  justify-content: space-around;
  width: ${props => (props.$menu ? 29 : 25)}px;
`;

const navTools = [
  { name: 'orbit', menu: true },
  { name: 'lookAt' },
  { name: 'pan' },
  { name: 'zoom' },
  { name: 'zoomWindow', menu: true },
  { name: 'display', menu: true },
  { name: 'gridSettings', menu: true },
  { name: 'viewports', menu: true },
];

const Workarea = () => (
  <Viewport>
    <Model />
    <Overlay>
      <Browser />
      <ViewCube />
    </Overlay>
    <BottomOverlay>
      <PanelHeader>
        <PanelTitle><Chevrons />COMMENTS</PanelTitle>
        <PanelButton aria-label="Add comment">
          <svg width="8" height="8" viewBox="0 0 8 8" stroke="currentColor" strokeWidth="1.500"><path d="M0 4h8M4 0v8" /></svg>
        </PanelButton>
      </PanelHeader>
      <NavBar>
        {navTools.map(tool => (
          <NavButton key={tool.name} aria-label={tool.name} $menu={tool.menu}>
            <SmallIcon name={tool.name} />
            {tool.menu && <Caret />}
          </NavButton>
        ))}
      </NavBar>
    </BottomOverlay>
  </Viewport>
);

/* ---------- timeline ---------- */

const TimelineBar = styled.footer`
  display: flex;
  height: 47px;
  padding: 0 11px 0 8px;
  background-color: #3b4453;
`;

const Playback = styled.div`
  display: flex;
  align-items: center;
  gap: 7px;
  width: 124px;
  padding-top: 5px;
`;

const Features = styled.ol`
  display: grid;
  grid-template-columns: repeat(22, 1fr);
  width: 493px;
`;

const Feature = styled.li`
  position: relative;
  display: flex;
  flex-direction: column;
  align-items: center;
  padding-top: 17px;
`;

const Rail = styled.span`
  display: flex;
  justify-content: ${props => (props.$end ? 'flex-start' : 'flex-end')};
  width: 100%;
  height: 6px;
  margin-top: 3px;

  &::before {
    content: '';
    width: ${props => (props.$start || props.$end ? '50%' : '100%')};
    border-bottom: 2px solid #667080;
    background: linear-gradient(#667080, #667080) no-repeat
      ${props => (props.$start ? 'left' : props.$end ? 'right' : 'center')} / 1px 100%;
  }
`;

const Expander = styled.button`
  position: absolute;
  bottom: 2px;
  left: 5px;
  display: flex;
  background-color: #b9bdc4;
`;

const Marker = styled.button`
  display: flex;
  align-self: flex-start;
  margin-top: 11px;
  margin-left: -6px;
`;

const TransportButton = styled(PanelButton)`
  color: #a3a8b2;
`;

const SettingsButton = styled(TransportButton)`
  align-items: center;
  margin-left: auto;
  padding-top: 5px;
`;

const features = [
  'newPart', 'sketchEdit', 'extrude', 'extrude', 'shellSmall', 'shellSmall', 'sketchEdit', 'extrude',
  'sketchEdit', 'extrude', 'base', 'moveSmall', 'array', 'mirror', 'array', 'mirror', 'shellSmall',
  'sketchEdit', 'extrude', 'extrude', 'filletSmall', 'filletSmall',
];

const Timeline = () => (
  <TimelineBar>
    <Playback>
      {['first', 'previous', 'play', 'next', 'last'].map(name => (
        <TransportButton key={name} aria-label={name}><SmallIcon name={name} /></TransportButton>
      ))}
    </Playback>
    <Features>
      {features.map((name, i) => (
        <Feature key={i}>
          <PanelButton aria-label={name}><SmallIcon name={name} /></PanelButton>
          <Rail $start={i === 0} $end={i === features.length - 1} />
          {name === 'array' && (
            <Expander aria-label="Expand group">
              <svg width="10" height="10" viewBox="0 0 10 10" stroke="#2e3440" strokeWidth="1.500"><path d="M5 1.500v7M1.500 5h7" /></svg>
            </Expander>
          )}
        </Feature>
      ))}
    </Features>
    <Marker aria-label="Timeline marker">
      <svg width="12" height="31" viewBox="0 0 12 31" fill="#c3c6cb"><path d="M0 0h12v4L7.500 9v22h-3V9L0 4z" /></svg>
    </Marker>
    <SettingsButton aria-label="Settings"><SmallIcon name="gear" /></SettingsButton>
  </TimelineBar>
);

const App = () => (
  <Page>
    <GlobalStyle />
    <Header />
    <Ribbon />
    <Workarea />
    <Timeline />
  </Page>
);

export default App;
